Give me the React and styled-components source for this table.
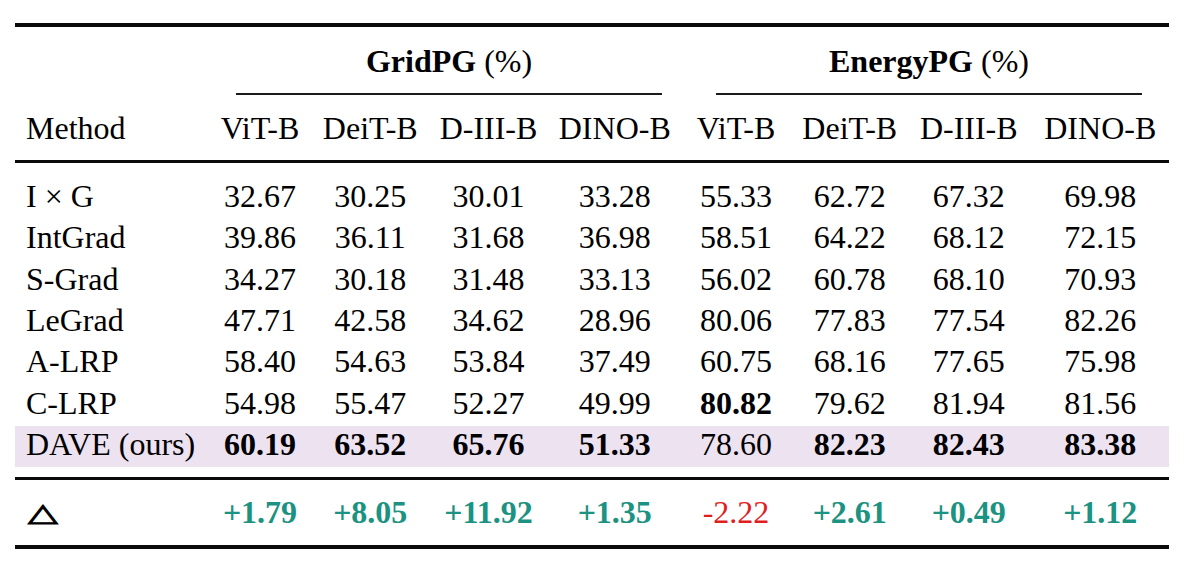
import React from "react";
import styled, { createGlobalStyle } from "styled-components";

const GlobalStyle = createGlobalStyle`
  html, body {
    margin: 0;
    padding: 0;
    background: #ffffff;
  }
  body {
    font-family: "Liberation Serif", "Times New Roman", serif;
    color: #000;
  }
`;

const COLS = "190.5px 109px 111.5px 125px 127.5px 115px 112.5px 125.5px 137.5px";

const Page = styled.div`
  width: 1188px;
  height: 572px;
  box-sizing: border-box;
  padding: 23px 19px 0 15px;
`;

const Table = styled.div`
  width: 1154px;
  font-size: 32px;
`;

const Rule = styled.div`
  height: ${(p) => p.$weight}px;
  background: #0a0a0a;
  margin-top: ${(p) => p.$top || 0}px;
`;

const GroupRow = styled.div`
  display: grid;
  grid-template-columns: ${COLS};
`;

const GroupCell = styled.div`
  grid-column: ${(p) => p.$span};
  display: flex;
  flex-direction: column;
`;

const GroupTitle = styled.div`
  padding-top: 13.7px;
  line-height: 41px;
  height: 41px;
  text-align: center;
  margin-left: ${(p) => p.$left}px;
  margin-right: ${(p) => p.$right}px;
  white-space: nowrap;
`;

const Strong = styled.span`
  font-weight: 700;
`;

const CMidRule = styled.div`
  margin-top: 11.3px;
  height: 2px;
  background: #1a1a1a;
  margin-left: ${(p) => p.$left}px;
  margin-right: ${(p) => p.$right}px;
`;

const HeadRow = styled.div`
  display: grid;
  grid-template-columns: ${COLS};
  padding-top: 13.2px;
  padding-bottom: 11.3px;
  line-height: 41px;
`;

const Body = styled.div`
  padding-top: 12.5px;
`;

const Row = styled.div`
  display: grid;
  grid-template-columns: ${COLS};
  line-height: 41.33px;
  height: 41.33px;
`;

const HighlightRow = styled.div`
  display: grid;
  grid-template-columns: ${COLS};
  margin-top: 2.5px;
  height: 41px;
  box-sizing: border-box;
  line-height: 36px;
  padding-bottom: 5px;
  background: #ece2f0;
`;

const DeltaRow = styled.div`
  display: grid;
  grid-template-columns: ${COLS};
  line-height: 41.33px;
  height: 41.33px;
  padding-top: 11.5px;
  padding-bottom: 12px;
`;

const Cell = styled.div`
  text-align: ${(p) => (p.$first ? "left" : "center")};
  padding-left: ${(p) => (p.$first ? "11px" : "0")};
  font-weight: ${(p) => (p.$bold ? 700 : 400)};
  color: ${(p) =>
    p.$tone === "up" ? "#1c9282" : p.$tone === "down" ? "#e01e1e" : "#000"};
  white-space: nowrap;
`;

const DeltaGlyph = styled.span`
  display: inline-block;
  font-family: "DejaVu Sans", sans-serif;
  font-weight: 400;
  font-size: 25px;
  transform: translate(2px, -2px) scaleX(1.55);
  transform-origin: left center;
  -webkit-text-stroke: 0.9px #000;
`;

const heads = ["ViT-B", "DeiT-B", "D-III-B", "DINO-B", "ViT-B", "DeiT-B", "D-III-B", "DINO-B"];

const rows = [
  { m: "I\u2005×\u2005G", v: ["32.67", "30.25", "30.01", "33.28", "55.33", "62.72", "67.32", "69.98"] },
  { m: "IntGrad", v: ["39.86", "36.11", "31.68", "36.98", "58.51", "64.22", "68.12", "72.15"] },
  { m: "S-Grad", v: ["34.27", "30.18", "31.48", "33.13", "56.02", "60.78", "68.10", "70.93"] },
  { m: "LeGrad", v: ["47.71", "42.58", "34.62", "28.96", "80.06", "77.83", "77.54", "82.26"] },
  { m: "A-LRP", v: ["58.40", "54.63", "53.84", "37.49", "60.75", "68.16", "77.65", "75.98"] },
  { m: "C-LRP", v: ["54.98", "55.47", "52.27", "49.99", "80.82", "79.62", "81.94", "81.56"], bold: [4] },
];

const dave = {
  m: "DAVE (ours)",
  v: ["60.19", "63.52", "65.76", "51.33", "78.60", "82.23", "82.43", "83.38"],
  bold: [0, 1, 2, 3, 5, 6, 7],
};

const deltas = ["+1.79", "+8.05", "+11.92", "+1.35", "-2.22", "+2.61", "+0.49", "+1.12"];

export default function App() {
  return (
    <>
      <GlobalStyle />
      <Page>
        <Table>
          <Rule $weight={4} />
          <GroupRow>
            <GroupCell $span="2 / 6">
              <GroupTitle $left={30.5} $right={16.5}>
                <Strong>GridPG</Strong> (%)
              </GroupTitle>
              <CMidRule $left={30.5} $right={16.5} />
            </GroupCell>
            <GroupCell $span="6 / 10">
              <GroupTitle $left={37.5} $right={27}>
                <Strong>EnergyPG</Strong> (%)
              </GroupTitle>
              <CMidRule $left={37.5} $right={27} />
            </GroupCell>
          </GroupRow>
          <HeadRow>
            <Cell $first>Method</Cell>
            {heads.map((h, i) => (
              <Cell key={i}>{h}</Cell>
            ))}
          </HeadRow>
          <Rule $weight={3} />
          <Body>
            {rows.map((r) => (
              <Row key={r.m}>
                <Cell $first>{r.m}</Cell>
                {r.v.map((v, i) => (
                  <Cell key={i} $bold={r.bold && r.bold.includes(i)}>
                    {v}
                  </Cell>
                ))}
              </Row>
            ))}
            <HighlightRow>
              <Cell $first>{dave.m}</Cell>
              {dave.v.map((v, i) => (
                <Cell key={i} $bold={dave.bold.includes(i)}>
                  {v}
                </Cell>
              ))}
            </HighlightRow>
          </Body>
          <Rule $weight={3} $top={10} />
          <DeltaRow>
            <Cell $first>
              <DeltaGlyph>△</DeltaGlyph>
            </Cell>
            {deltas.map((d, i) => (
              <Cell key={i} $bold={!d.startsWith("-")} $tone={d.startsWith("-") ? "down" : "up"}>
                {d}
              </Cell>
            ))}
          </DeltaRow>
          <Rule $weight={4} />
        </Table>
      </Page>
    </>
  );
}
